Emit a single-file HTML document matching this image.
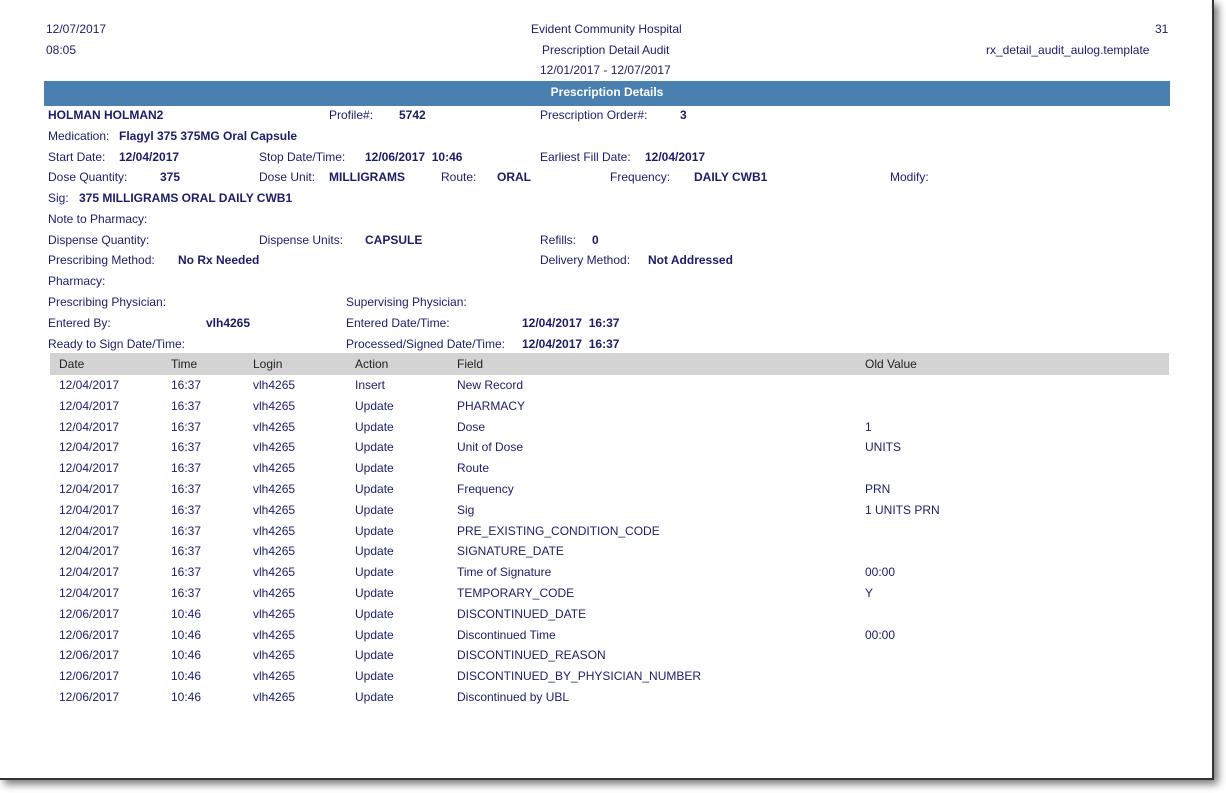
<!DOCTYPE html>
<html><head><meta charset="utf-8"><style>
body{margin:0;width:1226px;height:793px;background:#fff;position:relative;overflow:hidden;font-family:"Liberation Sans",Arial,sans-serif;font-size:12px;color:#1c1c6b}
.pg{position:absolute;left:0;top:0;width:1212px;height:778px;background:#fff;border-right:2px solid #333;border-bottom:2px solid #333;box-shadow:4px 4px 8px rgba(0,0,0,.55)}
.t{position:absolute;line-height:14px;white-space:nowrap}
.b{font-weight:bold}
.bar{position:absolute;left:44px;top:81px;width:1126px;height:25px;background:#4a80b0;color:#fff;font-weight:bold;text-align:center;line-height:23px}
.hd{position:absolute;left:50px;top:353px;width:1119px;height:22px;background:#d3d3d3}
</style></head><body>
<div class="pg"></div>
<span class="t" style="left:46px;top:22px">12/07/2017</span>
<span class="t" style="left:46px;top:43px">08:05</span>
<span class="t" style="left:531px;top:22px">Evident Community Hospital</span>
<span class="t" style="left:542px;top:43px">Prescription Detail Audit</span>
<span class="t" style="left:540px;top:63px">12/01/2017 - 12/07/2017</span>
<span class="t" style="left:1155px;top:22px">31</span>
<span class="t" style="left:986px;top:43px">rx_detail_audit_aulog.template</span>
<div class="bar">Prescription Details</div>

<span class="t b" style="left:48px;top:108px">HOLMAN HOLMAN2</span>
<span class="t" style="left:329px;top:108px">Profile#:</span>
<span class="t b" style="left:399px;top:108px">5742</span>
<span class="t" style="left:540px;top:108px">Prescription Order#:</span>
<span class="t b" style="left:680px;top:108px">3</span>

<span class="t" style="left:48px;top:129px">Medication:</span>
<span class="t b" style="left:119px;top:129px">Flagyl 375 375MG Oral Capsule</span>

<span class="t" style="left:48px;top:150px">Start Date:</span>
<span class="t b" style="left:119px;top:150px">12/04/2017</span>
<span class="t" style="left:259px;top:150px">Stop Date/Time:</span>
<span class="t b" style="left:365px;top:150px">12/06/2017&nbsp;&nbsp;10:46</span>
<span class="t" style="left:540px;top:150px">Earliest Fill Date:</span>
<span class="t b" style="left:645px;top:150px">12/04/2017</span>

<span class="t" style="left:48px;top:170px">Dose Quantity:</span>
<span class="t b" style="left:160px;top:170px">375</span>
<span class="t" style="left:259px;top:170px">Dose Unit:</span>
<span class="t b" style="left:329px;top:170px">MILLIGRAMS</span>
<span class="t" style="left:441px;top:170px">Route:</span>
<span class="t b" style="left:497px;top:170px">ORAL</span>
<span class="t" style="left:610px;top:170px">Frequency:</span>
<span class="t b" style="left:694px;top:170px">DAILY CWB1</span>
<span class="t" style="left:890px;top:170px">Modify:</span>

<span class="t" style="left:48px;top:191px">Sig:</span>
<span class="t b" style="left:79px;top:191px">375 MILLIGRAMS ORAL DAILY CWB1</span>
<span class="t" style="left:48px;top:212px">Note to Pharmacy:</span>
<span class="t" style="left:48px;top:233px">Dispense Quantity:</span>
<span class="t" style="left:259px;top:233px">Dispense Units:</span>
<span class="t b" style="left:365px;top:233px">CAPSULE</span>
<span class="t" style="left:540px;top:233px">Refills:</span>
<span class="t b" style="left:592px;top:233px">0</span>
<span class="t" style="left:48px;top:253px">Prescribing Method:</span>
<span class="t b" style="left:178px;top:253px">No Rx Needed</span>
<span class="t" style="left:540px;top:253px">Delivery Method:</span>
<span class="t b" style="left:648px;top:253px">Not Addressed</span>
<span class="t" style="left:48px;top:274px">Pharmacy:</span>
<span class="t" style="left:48px;top:295px">Prescribing Physician:</span>
<span class="t" style="left:346px;top:295px">Supervising Physician:</span>
<span class="t" style="left:48px;top:316px">Entered By:</span>
<span class="t b" style="left:206px;top:316px">vlh4265</span>
<span class="t" style="left:346px;top:316px">Entered Date/Time:</span>
<span class="t b" style="left:522px;top:316px">12/04/2017&nbsp;&nbsp;16:37</span>
<span class="t" style="left:48px;top:337px">Ready to Sign Date/Time:</span>
<span class="t" style="left:346px;top:337px">Processed/Signed Date/Time:</span>
<span class="t b" style="left:522px;top:337px">12/04/2017&nbsp;&nbsp;16:37</span>

<div class="hd"></div>
<span class="t" style="left:59px;top:357px;color:#222">Date</span>
<span class="t" style="left:171px;top:357px;color:#222">Time</span>
<span class="t" style="left:253px;top:357px;color:#222">Login</span>
<span class="t" style="left:355px;top:357px;color:#222">Action</span>
<span class="t" style="left:457px;top:357px;color:#222">Field</span>
<span class="t" style="left:865px;top:357px;color:#222">Old Value</span>

<div id="rows"></div>
<script>
var d=[["12/04/2017","16:37","Insert","New Record",""],
["12/04/2017","16:37","Update","PHARMACY",""],
["12/04/2017","16:37","Update","Dose","1"],
["12/04/2017","16:37","Update","Unit of Dose","UNITS"],
["12/04/2017","16:37","Update","Route",""],
["12/04/2017","16:37","Update","Frequency","PRN"],
["12/04/2017","16:37","Update","Sig","1 UNITS PRN"],
["12/04/2017","16:37","Update","PRE_EXISTING_CONDITION_CODE",""],
["12/04/2017","16:37","Update","SIGNATURE_DATE",""],
["12/04/2017","16:37","Update","Time of Signature","00:00"],
["12/04/2017","16:37","Update","TEMPORARY_CODE","Y"],
["12/06/2017","10:46","Update","DISCONTINUED_DATE",""],
["12/06/2017","10:46","Update","Discontinued Time","00:00"],
["12/06/2017","10:46","Update","DISCONTINUED_REASON",""],
["12/06/2017","10:46","Update","DISCONTINUED_BY_PHYSICIAN_NUMBER",""],
["12/06/2017","10:46","Update","Discontinued by UBL",""]];
var h="";
d.forEach(function(r,i){var y=378+i*20.8;
h+='<span class="t" style="left:59px;top:'+y+'px">'+r[0]+'</span>'+
'<span class="t" style="left:171px;top:'+y+'px">'+r[1]+'</span>'+
'<span class="t" style="left:253px;top:'+y+'px">vlh4265</span>'+
'<span class="t" style="left:355px;top:'+y+'px">'+r[2]+'</span>'+
'<span class="t" style="left:457px;top:'+y+'px">'+r[3]+'</span>'+
'<span class="t" style="left:865px;top:'+y+'px">'+r[4]+'</span>';});
document.getElementById("rows").innerHTML=h;
</script>
</body></html>
